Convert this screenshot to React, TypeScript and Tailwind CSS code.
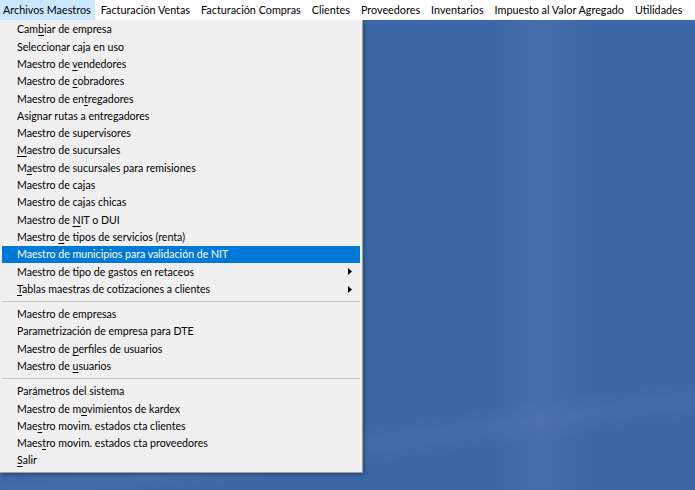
import React from 'react';

type Item = { label: React.ReactNode; sub?: boolean; active?: boolean } | 'sep';

const u = (s: string) => <span className="underline underline-offset-2">{s}</span>;

const items: Item[] = [
    { label: <>Cam{u('b')}iar de empresa</> },
    { label: 'Seleccionar caja en uso' },
    { label: <>Maestro de {u('v')}endedores</> },
    { label: <>Maestro de {u('c')}obradores</> },
    { label: <>Maestro de en{u('t')}regadores</> },
    { label: 'Asignar rutas a entregadores' },
    { label: 'Maestro de supervisores' },
    { label: <>{u('M')}aestro de sucursales</> },
    { label: <>M{u('a')}estro de sucursales para remisiones</> },
    { label: 'Maestro de cajas' },
    { label: 'Maestro de cajas chicas' },
    { label: <>Maestro de {u('N')}IT o DUI</> },
    { label: <>Maestro {u('d')}e tipos de servicios (renta)</> },
    { label: 'Maestro de municipios para validación de NIT', active: true },
    { label: 'Maestro de tipo de gastos en retaceos', sub: true },
    { label: <>{u('T')}ablas maestras de cotizaciones a clientes</>, sub: true },
    'sep',
    { label: 'Maestro de empresas' },
    { label: 'Parametrización de empresa para DTE' },
    { label: <>Maestro de {u('p')}erfiles de usuarios</> },
    { label: <>Maestro de {u('u')}suarios</> },
    'sep',
    { label: 'Parámetros del sistema' },
    { label: <>Maestro de m{u('o')}vimientos de kardex</> },
    { label: <>Mae{u('s')}tro movim. estados cta clientes</> },
    { label: <>Maes{u('t')}ro movim. estados cta proveedores</> },
    { label: <>{u('S')}alir</> },
];

const menus = [
    'Archivos Maestros',
    'Facturación Ventas',
    'Facturación Compras',
    'Clientes',
    'Proveedores',
    'Inventarios',
    'Impuesto al Valor Agregado',
    'Utilidades',
];

export default function App() {
    return (
        <div className="w-[695px] h-[490px] flex flex-col overflow-hidden text-[10.6px] text-black font-['Lato',sans-serif]">
            <div className="h-[20px] bg-white flex items-stretch whitespace-nowrap text-[10.8px]">
                {menus.map((m, i) => (
                    <div
                        key={m}
                        className={`flex items-center leading-none ${
                            i === 0 ? 'bg-[#cce8ff] pl-[3px] pr-[4px] mr-[2px]' : 'px-[4px] mr-[3px]'
                        }`}
                    >
                        {m}
                    </div>
                ))}
            </div>

            <div className="relative flex-1 bg-[#3b67a6] bg-[linear-gradient(172deg,transparent_80%,rgba(255,255,255,0.04)_84%,transparent_88%),linear-gradient(90deg,transparent_70%,rgba(255,255,255,0.03)_75%,rgba(255,255,255,0.05)_78%,rgba(255,255,255,0.02)_82%,transparent_87%)]">
                <div className="absolute left-0 top-0 w-[363px] bg-[#f0f0f0] border-r border-b border-[#a0a0a0] pt-[1px] pb-[3px] shadow-[2px_2px_3px_rgba(0,0,0,0.25)]">
                    {items.map((it, i) =>
                        it === 'sep' ? (
                            <div key={i} className="h-[8px] flex items-center px-[2px]">
                                <div className="h-px w-full bg-[#c8c8c8]" />
                            </div>
                        ) : (
                            <div
                                key={i}
                                className={`h-[17.3px] mx-[2px] pl-[15px] pr-[6px] flex items-center justify-between leading-none whitespace-nowrap ${
                                    it.active ? 'bg-[#0078d7] text-white' : ''
                                }`}
                            >
                                <span>{it.label}</span>
                                {it.sub && (
                                    <svg width="4" height="7" viewBox="0 0 4 7" className="mr-[2px]">
                                        <path d="M0 0 L4 3.5 L0 7 Z" fill="#000" />
                                    </svg>
                                )}
                            </div>
                        )
                    )}
                </div>
            </div>
        </div>
    );
}
